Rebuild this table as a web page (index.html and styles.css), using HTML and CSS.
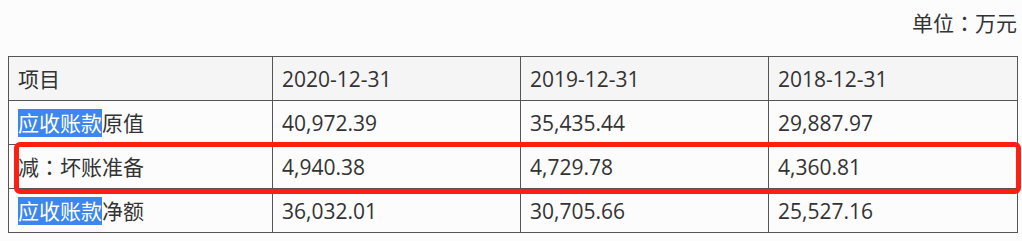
FILE: index.html
```html
<!DOCTYPE html>
<html lang="zh-CN">
<head>
<meta charset="utf-8">
<title>应收账款</title>
<link rel="stylesheet" href="styles.css">
</head>
<body>
<div class="page">
  <div class="unit">单位<span class="colon" lang="zh-TW">：</span>万元</div>
  <div class="table-wrap">
    <table class="data">
      <colgroup>
        <col class="c1"><col class="c2"><col class="c3"><col class="c4">
      </colgroup>
      <thead>
        <tr><th>项目</th><th>2020-12-31</th><th>2019-12-31</th><th>2018-12-31</th></tr>
      </thead>
      <tbody>
        <tr><td><span class="hl">应收账款</span>原值</td><td>40,972.39</td><td>35,435.44</td><td>29,887.97</td></tr>
        <tr><td>减<span class="colon" lang="zh-TW">：</span>坏账准备</td><td>4,940.38</td><td>4,729.78</td><td>4,360.81</td></tr>
        <tr><td><span class="hl">应收账款</span>净额</td><td>36,032.01</td><td>30,705.66</td><td>25,527.16</td></tr>
      </tbody>
    </table>
    <div class="mark"></div>
  </div>
</div>
</body>
</html>
```
FILE: styles.css
```css
html, body {
  margin: 0;
  padding: 0;
  background: #fcfcfc;
}
body {
  font-family: "Open Sans", "Noto Sans CJK SC", sans-serif;
  font-size: 21px;
  color: #333;
}
.page {
  padding: 0 5px 0 8px;
}
.unit {
  text-align: right;
  line-height: 30px;
  padding-top: 7px;
  height: 49px;
}
.colon {
  font-family: "Noto Sans CJK TC", "Noto Sans CJK SC", sans-serif;
}
.table-wrap {
  position: relative;
}
.data {
  width: 1009px;
  border-collapse: collapse;
  table-layout: fixed;
}
.c1 { width: 264px; }
.c2 { width: 248px; }
.c3 { width: 248px; }
.c4 { width: 249px; }
.data th, .data td {
  border: 1px solid #555;
  height: 43px;
  padding: 0 0 0 9px;
  text-align: left;
  font-weight: normal;
  line-height: 28px;
  white-space: nowrap;
}
.data th {
  background: #f5f5f5;
}
.hl {
  background: #3c86ee;
  color: #fff;
}
.mark {
  position: absolute;
  left: 6px;
  top: 86px;
  width: 1007px;
  height: 52px;
  box-sizing: border-box;
  border: 5px solid #ff1e12;
  border-radius: 6px;
  pointer-events: none;
}
```
